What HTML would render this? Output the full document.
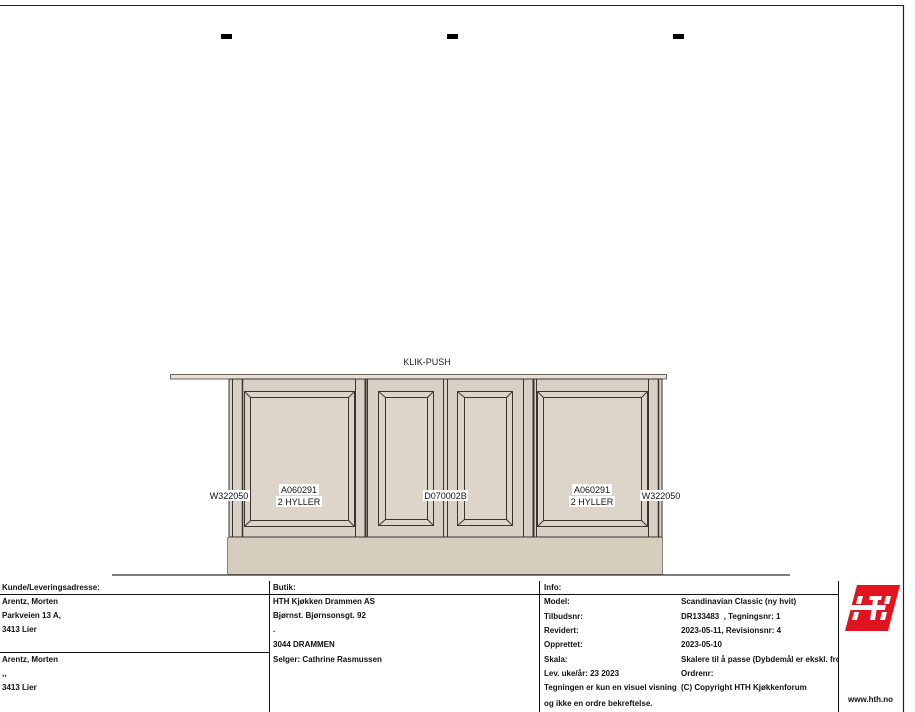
<!DOCTYPE html>
<html><head><meta charset="utf-8"><style>
html,body{margin:0;padding:0;background:#fff;}
body{width:915px;height:712px;position:relative;overflow:hidden;font-family:"Liberation Sans",Arial,sans-serif;}
.t{position:absolute;font-size:8px;font-weight:bold;color:#111;white-space:nowrap;line-height:10px;}
.l{position:absolute;background:#111;}
</style></head><body>
<svg width="915" height="712" style="position:absolute;left:0;top:0">
<line x1="0" y1="5.5" x2="903" y2="5.5" stroke="#222" stroke-width="1"/>
<line x1="903.5" y1="5" x2="903.5" y2="712" stroke="#222" stroke-width="1.2"/>
<rect x="221" y="34" width="11" height="5" fill="#000"/>
<rect x="447" y="34" width="11" height="5" fill="#000"/>
<rect x="673" y="34" width="11" height="5" fill="#000"/>
<text x="427" y="365" font-family="Liberation Sans" font-size="9" text-anchor="middle" fill="#222">KLIK-PUSH</text>
<!-- countertop -->
<rect x="170.5" y="374.5" width="496" height="4.5" fill="#e6e0d6" stroke="#6a645c" stroke-width="1"/>
<!-- body -->
<rect x="229" y="379" width="433" height="158" fill="#d8d0c5" stroke="#3a342e" stroke-width="1"/>
<!-- plinth -->
<rect x="227.5" y="537.5" width="435" height="37" fill="#d6cdbf" stroke="#8a8278" stroke-width="1"/>
<line x1="112" y1="575" x2="790" y2="575" stroke="#333" stroke-width="1.3"/>
<g fill="none" stroke="#3a342e" stroke-width="1">
<!-- verticals -->
<line x1="232.5" y1="379" x2="232.5" y2="537"/>
<line x1="242.5" y1="379" x2="242.5" y2="537" stroke-width="1.5"/>
<line x1="355.5" y1="379" x2="355.5" y2="537"/>
<line x1="365.5" y1="379" x2="365.5" y2="537" stroke-width="2"/>
<line x1="367.5" y1="379" x2="367.5" y2="537"/>
<line x1="443.5" y1="379" x2="443.5" y2="537"/>
<line x1="447.5" y1="379" x2="447.5" y2="537"/>
<line x1="523.5" y1="379" x2="523.5" y2="537"/>
<line x1="533.5" y1="379" x2="533.5" y2="537" stroke-width="2"/>
<line x1="536.5" y1="379" x2="536.5" y2="537"/>
<line x1="648.5" y1="379" x2="648.5" y2="537"/>
<line x1="658.5" y1="379" x2="658.5" y2="537" stroke-width="1.5"/>
<!-- door1 -->
<rect x="244.5" y="391.5" width="110" height="135" fill="#dcd4c9"/>
<rect x="250.5" y="397.5" width="98" height="123" fill="#ddd5ca"/>
<line x1="244.5" y1="391.5" x2="250.5" y2="397.5"/><line x1="354.5" y1="391.5" x2="348.5" y2="397.5"/>
<line x1="244.5" y1="526.5" x2="250.5" y2="520.5"/><line x1="354.5" y1="526.5" x2="348.5" y2="520.5"/>
<!-- door2 -->
<rect x="378.5" y="391.5" width="55" height="134" fill="#dcd4c9"/>
<rect x="385.5" y="397.5" width="42" height="122" fill="#ddd5ca"/>
<line x1="378.5" y1="391.5" x2="385.5" y2="397.5"/><line x1="433.5" y1="391.5" x2="427.5" y2="397.5"/>
<line x1="378.5" y1="525.5" x2="385.5" y2="519.5"/><line x1="433.5" y1="525.5" x2="427.5" y2="519.5"/>
<!-- door3 -->
<rect x="457.5" y="391.5" width="55" height="134" fill="#dcd4c9"/>
<rect x="464.5" y="397.5" width="42" height="122" fill="#ddd5ca"/>
<line x1="457.5" y1="391.5" x2="464.5" y2="397.5"/><line x1="512.5" y1="391.5" x2="506.5" y2="397.5"/>
<line x1="457.5" y1="525.5" x2="464.5" y2="519.5"/><line x1="512.5" y1="525.5" x2="506.5" y2="519.5"/>
<!-- door4 -->
<rect x="537.5" y="391.5" width="110" height="135" fill="#dcd4c9"/>
<rect x="543.5" y="397.5" width="98" height="123" fill="#ddd5ca"/>
<line x1="537.5" y1="391.5" x2="543.5" y2="397.5"/><line x1="647.5" y1="391.5" x2="641.5" y2="397.5"/>
<line x1="537.5" y1="526.5" x2="543.5" y2="520.5"/><line x1="647.5" y1="526.5" x2="641.5" y2="520.5"/>
</g>
<!-- labels -->
<g font-family="Liberation Sans" font-size="9" fill="#111" text-anchor="middle">
<rect x="208" y="490" width="42" height="11" fill="#fff"/><text x="229" y="499">W322050</text>
<rect x="279" y="484" width="40" height="11" fill="#fff"/><text x="299" y="493">A060291</text>
<rect x="276" y="496" width="46" height="11" fill="#fff"/><text x="299" y="505">2 HYLLER</text>
<rect x="423" y="490" width="45" height="11" fill="#fff"/><text x="445.5" y="499">D070002B</text>
<rect x="572" y="484" width="40" height="11" fill="#fff"/><text x="592" y="493">A060291</text>
<rect x="569" y="496" width="46" height="11" fill="#fff"/><text x="592" y="505">2 HYLLER</text>
<rect x="640" y="490" width="42" height="11" fill="#fff"/><text x="661" y="499">W322050</text>
</g>
<!-- table lines -->
<g stroke="#111" stroke-width="1">
<line x1="0" y1="594.5" x2="838" y2="594.5"/>
<line x1="0" y1="652.5" x2="269" y2="652.5"/>
<line x1="269.5" y1="581" x2="269.5" y2="712"/>
<line x1="539.5" y1="581" x2="539.5" y2="712"/>
<line x1="838.5" y1="581" x2="838.5" y2="712"/>
</g>
<!-- HTH logo -->
<g transform="translate(845,585)">
<polygon points="12,0 55,0 43,46 0,46" fill="#e0141e"/>
<g fill="#fff">
<polygon points="13,11 18,11 16,19 11,19"/>
<polygon points="9,27 14,27 12,35 7,35"/>
<rect x="11" y="20" width="35" height="5" transform="skewX(-14)"/>
<polygon points="25,11 37,11 36,15 24,15"/>
<polygon points="28,15 33,15 30,35 25,35"/>
<polygon points="41,11 46,11 44,19 39,19"/>
<polygon points="37,27 42,27 40,35 35,35"/>
</g>
</g>
</svg>
<div class="t" style="left:2px;top:583px">Kunde/Leveringsadresse:</div>
<div class="t" style="left:2px;top:597px">Arentz, Morten</div>
<div class="t" style="left:2px;top:611px">Parkveien 13 A,</div>
<div class="t" style="left:2px;top:625px">3413 Lier</div>
<div class="t" style="left:2px;top:655px">Arentz, Morten</div>
<div class="t" style="left:2px;top:669px">,,</div>
<div class="t" style="left:2px;top:683px">3413 Lier</div>
<div class="t" style="left:273px;top:583px">Butik:</div>
<div class="t" style="left:273px;top:597px">HTH Kjøkken Drammen AS</div>
<div class="t" style="left:273px;top:611px">Bjørnst. Bjørnsonsgt. 92</div>
<div class="t" style="left:273px;top:625px">.</div>
<div class="t" style="left:273px;top:640px">3044 DRAMMEN</div>
<div class="t" style="left:273px;top:655px">Selger: Cathrine Rasmussen</div>
<div class="t" style="left:544px;top:583px">Info:</div>
<div class="t" style="left:544px;top:597px">Model:</div>
<div class="t" style="left:544px;top:612px">Tilbudsnr:</div>
<div class="t" style="left:544px;top:626px">Revidert:</div>
<div class="t" style="left:544px;top:640px">Opprettet:</div>
<div class="t" style="left:544px;top:655px">Skala:</div>
<div class="t" style="left:544px;top:669px">Lev. uke/år: 23 2023</div>
<div class="t" style="left:544px;top:683px">Tegningen er kun en visuel visning</div>
<div class="t" style="left:544px;top:699px">og ikke en ordre bekreftelse.</div>
<div class="t" style="left:681px;top:597px">Scandinavian Classic (ny hvit)</div>
<div class="t" style="left:681px;top:612px">DR133483 &nbsp;, Tegningsnr: 1</div>
<div class="t" style="left:681px;top:626px">2023-05-11, Revisionsnr: 4</div>
<div class="t" style="left:681px;top:640px">2023-05-10</div>
<div class="t" style="left:681px;top:655px;width:157px;overflow:hidden">Skalere til å passe (Dybdemål er ekskl. front)</div>
<div class="t" style="left:681px;top:669px">Ordrenr:</div>
<div class="t" style="left:681px;top:683px">(C) Copyright HTH Kjøkkenforum</div>
<div class="t" style="left:848px;top:695px">www.hth.no</div>
</body></html>
